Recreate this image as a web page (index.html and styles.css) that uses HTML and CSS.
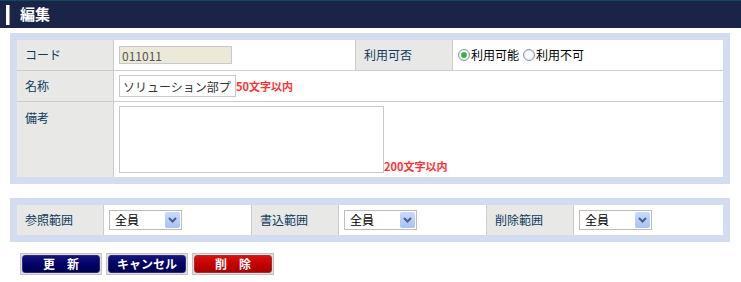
FILE: index.html
```html
<!DOCTYPE html>
<html lang="ja">
<head>
    <meta charset="UTF-8">
    <title>編集</title>
    <link rel="stylesheet" href="styles.css">
</head>
<body>
    <div class="page-title"><span class="title-bar"></span>編集</div>

    <div class="panel">
        <div class="form-grid">
            <div class="lbl">コード</div>
            <div class="val"><input type="text" class="code-input" value="011011" disabled></div>
            <div class="lbl">利用可否</div>
            <div class="val radios">
                <label><input type="radio" name="use" checked>利用可能</label>
                <label><input type="radio" name="use">利用不可</label>
            </div>

            <div class="lbl">名称</div>
            <div class="val wide">
                <input type="text" class="name-input" value="ソリューション部プロジェクト">
                <span class="note">50文字以内</span>
            </div>

            <div class="lbl top">備考</div>
            <div class="val wide top">
                <textarea class="memo"></textarea>
                <span class="note">200文字以内</span>
            </div>
        </div>
    </div>

    <div class="panel range-panel">
        <div class="range-grid">
            <div class="lbl">参照範囲</div>
            <div class="val">
                <span class="sel"><select><option>全員</option></select><span class="sel-btn"><svg width="9" height="6" viewBox="0 0 9 6"><path d="M1 1l3.5 3.5L8 1" fill="none" stroke="#4a5f86" stroke-width="2"/></svg></span></span>
            </div>
            <div class="lbl">書込範囲</div>
            <div class="val">
                <span class="sel"><select><option>全員</option></select><span class="sel-btn"><svg width="9" height="6" viewBox="0 0 9 6"><path d="M1 1l3.5 3.5L8 1" fill="none" stroke="#4a5f86" stroke-width="2"/></svg></span></span>
            </div>
            <div class="lbl">削除範囲</div>
            <div class="val">
                <span class="sel"><select><option>全員</option></select><span class="sel-btn"><svg width="9" height="6" viewBox="0 0 9 6"><path d="M1 1l3.5 3.5L8 1" fill="none" stroke="#4a5f86" stroke-width="2"/></svg></span></span>
            </div>
        </div>
    </div>

    <div class="buttons">
        <button class="btn"><span>更　新</span></button>
        <button class="btn"><span>キャンセル</span></button>
        <button class="btn btn-red"><span>削　除</span></button>
    </div>
</body>
</html>
```

FILE: styles.css
```css
body {
    margin: 0;
    font-family: "Noto Sans CJK JP", "DejaVu Sans", sans-serif;
    font-size: 12px;
    color: #000;
}
.page-title {
    display: flex;
    align-items: center;
    height: 26px;
    border-top: 1px solid #0d4a5c;
    background-color: #1a2449;
    color: #fff;
    font-size: 15px;
    font-weight: bold;
    line-height: 20px;
    padding-bottom: 1px;
}
.title-bar {
    width: 3px;
    height: 20px;
    margin: 2px 10px 0 6px;
    background-color: #fff;
    border-right: 1px solid #9c8fbf;
}
.panel {
    width: 720px;
    box-sizing: border-box;
    margin: 5px 0 0 10px;
    padding: 7px;
    background-color: #d4dcf0;
}
.range-panel {
    margin-top: 14px;
}
.form-grid {
    display: grid;
    grid-template-columns: 96px 241px 96px 1fr;
    grid-template-rows: 30px 30px 75px;
    gap: 1px;
    background-color: #cccccc;
}
.range-grid {
    display: grid;
    grid-template-columns: 86px 147px 86px 147px 86px 1fr;
    grid-template-rows: 30px;
    gap: 1px;
    background-color: #cccccc;
}
.lbl {
    display: flex;
    align-items: center;
    padding-left: 8px;
    background-color: #e8e8e6;
    color: #0c3c5c;
    line-height: 16px;
}
.val {
    display: flex;
    align-items: center;
    padding-left: 5px;
    background-color: #fff;
    line-height: 16px;
}
.wide {
    grid-column: span 3;
}
.lbl.top {
    align-items: flex-start;
    padding-top: 8px;
}
.val.top {
    align-items: flex-end;
    padding-top: 4px;
    padding-bottom: 4px;
}
input, textarea, select {
    font-family: inherit;
    font-size: 12px;
    margin: 0;
}
.code-input {
    width: 113px;
    height: 18px;
    box-sizing: border-box;
    padding: 0 2px;
    border: 1px solid #c9c9c9;
    background-color: #ece9d8;
    color: #555;
}
.name-input {
    width: 117px;
    height: 22px;
    box-sizing: border-box;
    padding: 0 3px;
    border: 1px solid #c9c9c9;
    color: #333;
}
.memo {
    width: 265px;
    height: 67px;
    box-sizing: border-box;
    border: 1px solid #c9c9c9;
    resize: none;
    align-self: flex-start;
}
.note {
    color: #ff3333;
    font-size: 11px;
    font-weight: bold;
    line-height: 14px;
}
.radios label {
    display: inline-flex;
    align-items: center;
    margin-right: 4px;
}
.radios input {
    appearance: none;
    width: 12px;
    height: 12px;
    margin: 0 1px 0 0;
    border: 1px solid #7d95b3;
    border-radius: 50%;
    background: radial-gradient(circle, #ffffff 30%, #dcdcd6 100%);
}
.radios input:checked {
    background: radial-gradient(circle, #2fb52f 0 2px, #8fd08f 3px, #ffffff 3.5px, #dcdcd6 100%);
}
.sel {
    position: relative;
    display: inline-block;
    width: 73px;
    height: 20px;
    box-sizing: border-box;
    border: 1px solid #bdbdbd;
    background-color: #fff;
}
.sel select {
    appearance: none;
    width: 100%;
    height: 18px;
    border: none;
    padding: 0 0 0 5px;
    background: transparent;
    color: #000;
    line-height: 18px;
}
.sel-btn {
    position: absolute;
    top: 1px;
    right: 1px;
    width: 15px;
    height: 16px;
    display: flex;
    align-items: center;
    justify-content: center;
    border-radius: 2px;
    background: linear-gradient(#c8dafc, #a8c2f4);
}
.buttons {
    display: flex;
    gap: 4px;
    margin: 11px 0 0 20px;
}
.btn {
    width: 82px;
    height: 22px;
    box-sizing: border-box;
    padding: 1px;
    border: 1px solid #c2c2c2;
    background-color: #dedede;
    cursor: pointer;
}
.btn span {
    display: block;
    height: 18px;
    box-sizing: border-box;
    border: 1px solid #2b2b7a;
    border-radius: 3px;
    background: linear-gradient(#14147c, #000062 60%, #00004e);
    color: #fff;
    font-family: "Noto Sans CJK JP", sans-serif;
    font-size: 12px;
    font-weight: bold;
    line-height: 16px;
}
.btn-red span {
    border-color: #a23030;
    background: linear-gradient(#d81010, #c00000 60%, #a80000);
}
```
